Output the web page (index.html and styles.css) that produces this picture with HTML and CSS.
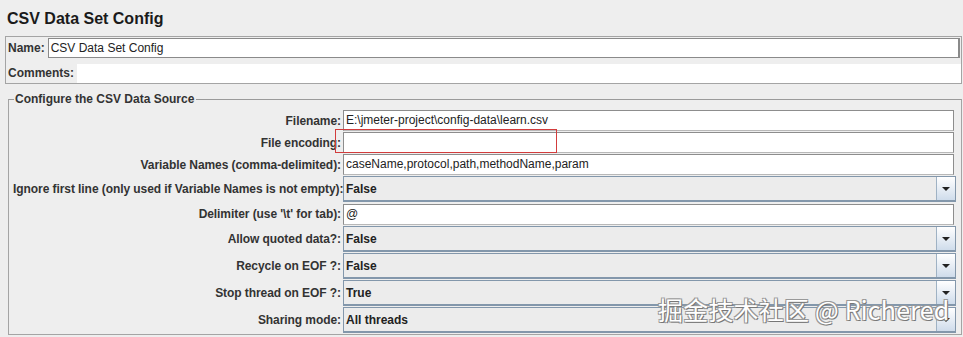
FILE: index.html
```
<!DOCTYPE html>
<html>

<head>
    <title>CSV Data Set Config</title>
    <meta charset="UTF-8">
    <link rel="stylesheet" href="styles.css">
</head>

<body>
    <h1 class="titulo">CSV Data Set Config</h1>

    <div class="painel-nome">
        <div class="linha-nome">
            <span class="rotulo">Name:</span>
            <div class="campo campo-nome">CSV Data Set Config</div>
        </div>
        <div class="linha-nome">
            <span class="rotulo">Comments:</span>
            <div class="campo campo-comentario"></div>
        </div>
    </div>

    <fieldset class="grupo">
        <legend>Configure the CSV Data Source</legend>
        <div class="formulario">
            <label>Filename:</label>
            <div class="campo texto">E:\jmeter-project\config-data\learn.csv</div>

            <label>File encoding:</label>
            <div class="campo texto"></div>

            <label>Variable Names (comma-delimited):</label>
            <div class="campo texto">caseName,protocol,path,methodName,param</div>

            <label>Ignore first line (only used if Variable Names is not empty):</label>
            <div class="combo"><span>False</span><i class="seta"></i></div>

            <label>Delimiter (use '\t' for tab):</label>
            <div class="campo texto delimitador">@</div>

            <label>Allow quoted data?:</label>
            <div class="combo"><span>False</span><i class="seta"></i></div>

            <label>Recycle on EOF ?:</label>
            <div class="combo"><span>False</span><i class="seta"></i></div>

            <label>Stop thread on EOF ?:</label>
            <div class="combo"><span>True</span><i class="seta"></i></div>

            <label>Sharing mode:</label>
            <div class="combo"><span>All threads</span><i class="seta"></i></div>
        </div>
    </fieldset>

    <div class="destaque"></div>
    <div class="marca">掘金技术社区 @ Richered</div>
</body>

</html>
```
FILE: styles.css
```
* {
    margin: 0;
    padding: 0;
    box-sizing: border-box;
}

body {
    background: #eeeeee;
    font-family: "Liberation Sans", Arial, sans-serif;
    color: #222;
    width: 963px;
    height: 337px;
    overflow: hidden;
    position: relative;
}

.titulo {
    font-size: 16px;
    font-weight: bold;
    padding: 10px 0 0 7px;
    height: 36px;
    color: #1a1a1a;
}

.painel-nome {
    margin: 0 1px 0 5px;
    border: 1px solid #a4a4a4;
    padding: 1px 0 0 0;
    height: 48px;
}

.linha-nome {
    display: flex;
    align-items: center;
    height: 20px;
    margin-bottom: 5px;
}

.rotulo {
    font-size: 12px;
    font-weight: bold;
    padding: 0 3px 0 2px;
    color: #333;
}

.campo {
    background: #fff;
    font-size: 12px;
    height: 20px;
    line-height: 18px;
    padding-left: 2px;
    flex: 1;
}

.campo-nome {
    border: 1px solid #8a8a8a;
    border-right-width: 2px;
    margin-right: 1px;
}

.campo-comentario {
    height: 19px;
}

.grupo {
    margin: 8px 1px 0 8px;
    border: 1px solid #a4a4a4;
    border-top-color: #9a9a9a;
    padding: 0 5px 1px 4px;
    height: 243px;
}

.grupo legend {
    font-size: 12px;
    font-weight: bold;
    color: #333;
    padding: 0 2px 0 1px;
    margin-left: 1px;
}

.formulario {
    display: grid;
    grid-template-columns: 328px 1fr;
    column-gap: 2px;
    row-gap: 1px;
    padding-top: 4px;
    align-items: center;
}

.formulario label {
    font-size: 12px;
    font-weight: bold;
    text-align: right;
    color: #333;
    white-space: nowrap;
    letter-spacing: -0.07px;
}

.texto {
    border: 1px solid #8d8d8d;
    border-bottom-color: #b8b8b8;
    margin-right: 2px;
    height: 21px;
    line-height: 19px;
}

.delimitador {
    margin-top: 1px;
}

.combo {
    display: flex;
    height: 26px;
    border: 1px solid #8397ab;
    border-bottom-width: 2px;
    background: #ececec;
    font-size: 12px;
    font-weight: bold;
    align-items: center;
}

.combo span {
    flex: 1;
    padding-left: 2px;
}

.seta {
    width: 19px;
    height: 100%;
    border-left: 1px solid #9fb2c4;
    background: linear-gradient(#ffffff, #cfdceb);
    position: relative;
}

.seta::after {
    content: "";
    position: absolute;
    left: 5px;
    top: 10px;
    border-left: 4px solid transparent;
    border-right: 4px solid transparent;
    border-top: 4px solid #222;
}

.destaque {
    position: absolute;
    left: 335px;
    top: 129px;
    width: 222px;
    height: 24px;
    border: 1px solid #d23c3c;
}

.marca {
    position: absolute;
    left: 658px;
    top: 291px;
    font-family: "Noto Sans CJK SC", "Liberation Sans", sans-serif;
    font-size: 25px;
    color: #ffffff;
    letter-spacing: 0.2px;
    text-shadow: 1px 1px 0 #777, -1px -1px 0 #999, 1px -1px 0 #999, -1px 1px 0 #999;
}
```
